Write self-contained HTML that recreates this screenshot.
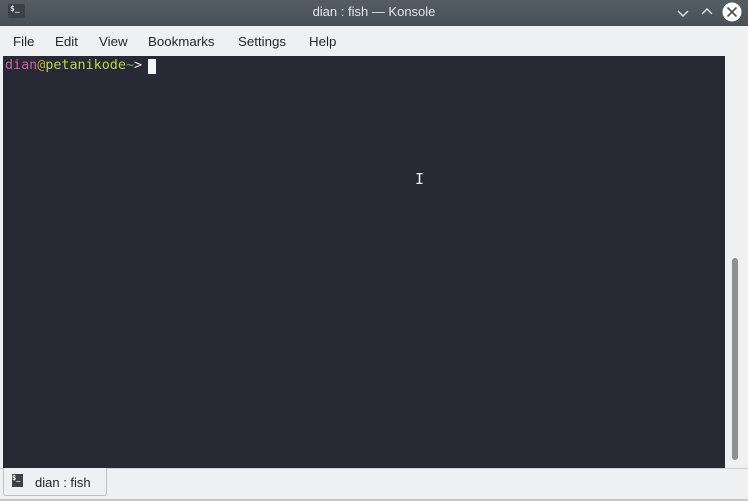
<!DOCTYPE html>
<html><head><style>
body{margin:0;width:748px;height:501px;background:#eff0f1;font-family:"Liberation Sans","DejaVu Sans",sans-serif;position:relative;overflow:hidden}
.title{position:absolute;left:0;top:0;width:748px;height:26px;background:linear-gradient(#555d64,#475057);color:#e4e6e8;font-size:13px;text-align:center;line-height:24px}
.menu{position:absolute;top:26px;left:0;height:30px;font-size:13.3px;color:#232629}
.menu span{position:absolute;top:8px;white-space:nowrap}
.term{position:absolute;left:3px;top:56px;width:722px;height:412px;background:#272a35;font-family:"DejaVu Sans Mono",monospace;font-size:13.4px}
.sb{position:absolute;left:732px;top:258px;width:6px;height:202px;background:#909090;border-radius:3px}
.tab{position:absolute;left:3px;top:468px;width:102px;height:27px;border:1px solid #bfc1c3;border-top:none;border-radius:0 0 3px 3px;background:#eff0f1;font-size:13px;color:#232629}
</style></head><body>
<div class="title">dian : fish — Konsole</div>
<div style="position:absolute;left:8px;top:4px;width:17px;height:14px;background:#3a4147;border-radius:2px;color:#ddd;font:bold 8px monospace;line-height:10px;padding-left:2px;box-sizing:border-box">$_</div>
<svg style="position:absolute;left:676px;top:6px" width="14" height="14"><path d="M2 5 L7 10 L12 5" stroke="#e4e6e8" stroke-width="1.4" fill="none"/></svg>
<svg style="position:absolute;left:700px;top:5px" width="14" height="14"><path d="M2 9 L7 4 L12 9" stroke="#e4e6e8" stroke-width="1.4" fill="none"/></svg>
<svg style="position:absolute;left:721px;top:1px" width="22" height="22"><circle cx="11" cy="11" r="9.5" fill="#fff"/><path d="M6.5 6.5 L15.5 15.5 M15.5 6.5 L6.5 15.5" stroke="#475057" stroke-width="1.6"/></svg>
<div class="menu"><span style="left:13px">File</span><span style="left:55px">Edit</span><span style="left:99px">View</span><span style="left:148px">Bookmarks</span><span style="left:238px">Settings</span><span style="left:309px">Help</span></div>
<div class="term"><div style="position:absolute;left:2px;top:2px;white-space:pre"><span style="color:#d45fae">dian</span><span style="color:#c5a23a">@</span><span style="color:#c6d14a">petanikode</span><span style="color:#5fb35f">~</span><span style="color:#e8e8e8">&gt; </span></div>
<div style="position:absolute;left:145px;top:3px;width:8px;height:15px;background:#f5f5f5"></div>
<div style="position:absolute;left:412px;top:114px;color:#eee;font-size:15px">I</div></div>
<div class="sb"></div>
<div style="position:absolute;left:0;top:468px;width:748px;height:1px;background:#cfd1d3"></div>
<div class="tab"><div style="position:absolute;left:8px;top:6px;width:11px;height:13px;background:#3a4147;color:#fff;font:bold 7px monospace;line-height:9px">$_</div><span style="position:absolute;left:31px;top:7px">dian : fish</span></div>
<div style="position:absolute;left:0;top:499px;width:748px;height:2px;background:#c4c6c8"></div>
</body></html>
